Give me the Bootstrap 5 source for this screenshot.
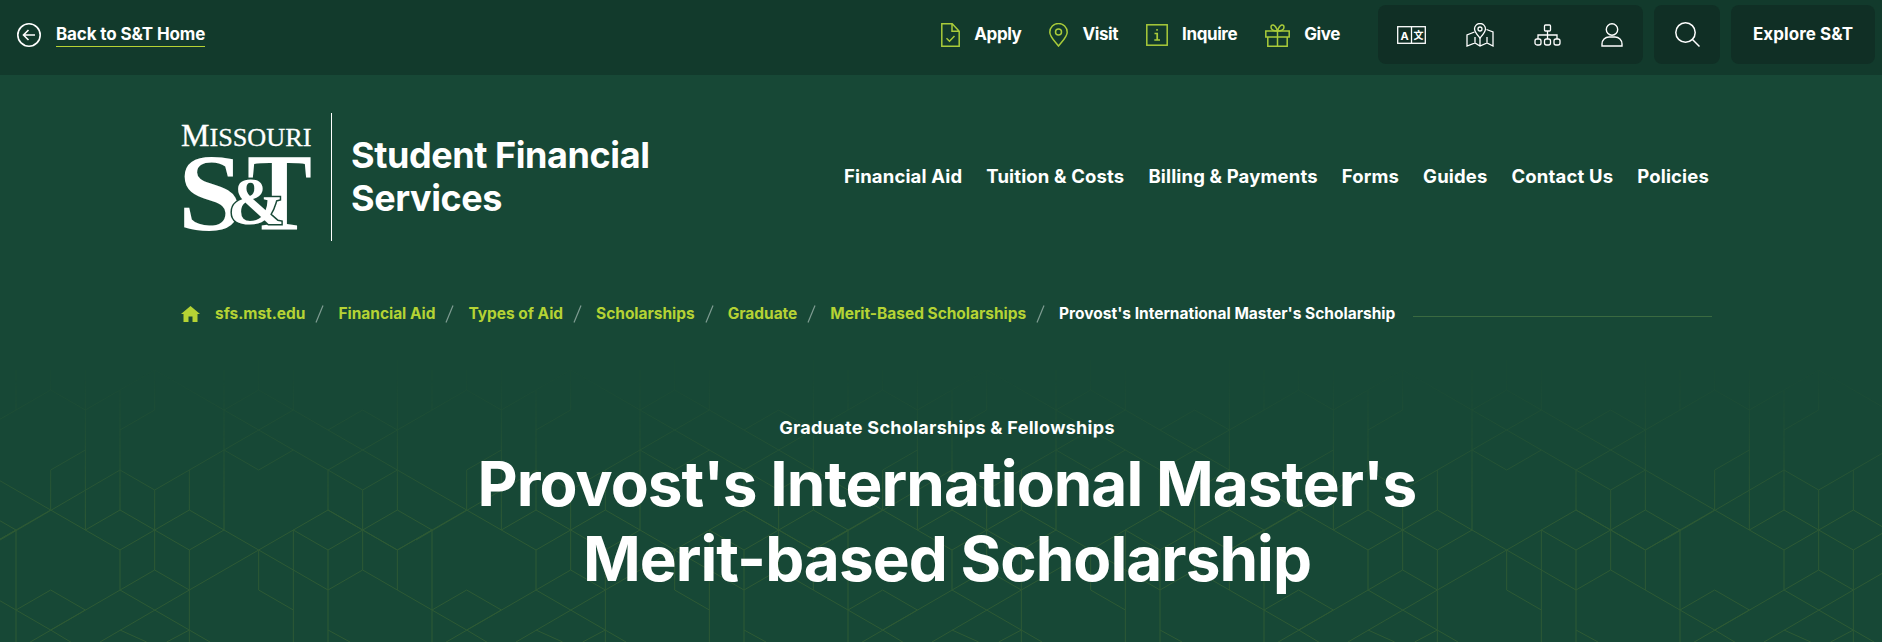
<!DOCTYPE html>
<html lang="en">
<head>
    <meta charset="UTF-8">
    <meta name="viewport" content="width=device-width, initial-scale=1.0">
    <title>Provost's International Master's Merit-based Scholarship</title>
    <link href="https://cdn.jsdelivr.net/npm/bootstrap@5.3.0/dist/css/bootstrap.min.css" rel="stylesheet">
    <script src="https://cdn.jsdelivr.net/npm/bootstrap@5.3.0/dist/js/bootstrap.bundle.min.js"></script>
    <style>
        html, body { height: 100%; overflow: hidden; }
        body {
            background: #174836;
            color: #fff;
            font-family: Inter, "Liberation Sans", sans-serif;
            font-weight: 700;
        }
        a { color: inherit; text-decoration: none; }
        svg { display: block; flex: none; }

        .top-strip { height: 75px; background: #123a2c; padding: 5px 7px 11px 17px; }
        .back-link { font-size: 17px; letter-spacing: -.13px; border-bottom: 1px solid #b5d334; line-height: 20px; padding-bottom: 2px; margin-left: 15px; margin-top: 1px; }
        .quick-links { margin-right: 38px; gap: 28px; font-size: 17px; letter-spacing: -.4px; }
        .quick-links a { gap: 14px; }
        .dark-panel { background: #102f25; border-radius: 8px; height: 59px; }
        .tool-panel { width: 265px; padding: 0 20px 0 19px; }
        .search-panel { width: 66px; margin-left: 11px; }
        .explore-panel { width: 144px; margin-left: 11px; font-size: 17px; letter-spacing: .05px; }

        .page-wrap { padding: 0 170px 0 181px; }
        .head-row { padding-top: 38px; }
        .logo-mark { margin: 0 -3px; }
        .logo-rule { width: 1px; height: 128px; background: #fff; margin: 0 20px 0 19px; }
        .unit-name { font-size: 36px; line-height: 43px; letter-spacing: -.42px; width: 340px; margin: 0 0 0 -1px; }
        .main-links { gap: 24px; font-size: 18.5px; letter-spacing: .16px; margin-right: 3px; margin-top: -1px; }

        .crumbs { margin-top: 61px; height: 24px; font-size: 15.5px; letter-spacing: -.03px; color: #b5d334; }
        .crumbs .sep { width: 33px; flex: none; }
        .crumbs .now { color: #fff; letter-spacing: 0; }
        .crumb-line { height: 1px; background: #3a6a40; margin: 4px 0 0 18px; }
        .home-mark { margin-right: 15px; }

        .hero-block { margin-top: 90px; padding-left: 12px; position: relative; z-index: 1; }
        .hero-kicker { font-size: 18px; line-height: 24px; letter-spacing: .3px; }
        .hero-title { font-size: 62px; line-height: 75px; font-weight: 700; letter-spacing: -.95px; margin: 6px 0 0; }

        .hex-bg {
            position: absolute; left: 0; top: 350px; width: 1882px; height: 292px;
            -webkit-mask-image: linear-gradient(to bottom, rgba(0,0,0,.08) 10%, rgba(0,0,0,.55) 35%, #000 58%);
            mask-image: linear-gradient(to bottom, rgba(0,0,0,.08) 10%, rgba(0,0,0,.55) 35%, #000 58%);
        }
    </style>
</head>
<body>
    <!-- hex line texture, one 416px tile repeated across -->
    <svg class="hex-bg" viewBox="0 0 5646 876" fill="none" stroke="#2e5a35" stroke-width="3">
        <defs>
            <g id="hexTile">
                <path d="M48 60V180M152 60V120M256 60V540M360 120V480M464 60V180M672 60V540M776 30V120M880 60V180M1192 30V480"/>
                <path d="M-56 240L152 120L256 180L464 60L672 180L776 120L1192 360L1400 480"/>
                <path d="M360 240L464 180M672 180L1088 420M672 300L776 360L880 300M672 300L880 180"/>
                <path d="M984 240L1088 180L1192 240L984 360V480M1192 360L1088 420V660"/>
                <path d="M672 300L464 420L360 360L0 570M152 360L256 300M152 360V480M568 360V480M464 420V660"/>
                <path d="M152 480L360 600L568 480L672 540L568 600L360 480L256 540"/>
                <path d="M672 540L984 720L1088 660L1400 840L1500 900M360 600V720M568 600V900"/>
                <path d="M464 660L84 880M464 660L568 720L776 600L984 480L1192 600L1400 480M568 720L300 876"/>
                <path d="M360 720L630 876M776 600V720L880 780M880 540L984 600L1192 480L1296 540L1192 600L984 480"/>
                <path d="M880 540V876M984 600V876M1192 600V720M1296 540V876M360 840L440 876M568 840L500 876M984 840L1050 876"/>
                <path d="M1296 780L1400 720L1504 780L1400 840"/>
            </g>
        </defs>
        <use href="#hexTile" x="-1248"/>
        <use href="#hexTile"/>
        <use href="#hexTile" x="1248"/>
        <use href="#hexTile" x="2496"/>
        <use href="#hexTile" x="3744"/>
        <use href="#hexTile" x="4992"/>
    </svg>

    <div class="top-strip d-flex align-items-center">
        <a href="#" class="d-flex align-items-center">
            <svg width="24" height="24" viewBox="0 0 24 24" fill="none" stroke="#fff" stroke-width="1.6">
                <circle cx="12" cy="12" r="11.2"/>
                <path d="M18 12H6.5M11.5 7l-5 5 5 5"/>
            </svg>
            <span class="back-link">Back to S&amp;T Home</span>
        </a>
        <div class="quick-links d-flex align-items-center ms-auto">
            <a href="#" class="d-flex align-items-center">
                <svg width="19" height="24" viewBox="0 0 19 24" fill="none" stroke="#a9cb3a" stroke-width="1.5">
                    <path d="M.8.8h10.4l7 7.4v15H.8zM11 1v7.2h7"/>
                    <path d="M5.5 15.2l3 3 5-5.2"/>
                </svg>
                Apply
            </a>
            <a href="#" class="d-flex align-items-center">
                <svg width="19" height="24" viewBox="0 0 19 24" fill="none" stroke="#a9cb3a" stroke-width="1.5">
                    <path d="M9.5 23C5 17.5.8 13.6.8 9.2a8.7 8.7 0 0 1 17.4 0C18.200 13.600 14 17.500 9.500 23z"/>
                    <circle cx="9.500" cy="9" r="3"/>
                </svg>
                Visit
            </a>
            <a href="#" class="d-flex align-items-center">
                <svg width="22" height="22" viewBox="0 0 22 22" fill="none" stroke="#a9cb3a" stroke-width="1.5">
                    <rect x=".8" y=".8" width="20.400" height="20.400"/>
                    <path d="M8.500 9.500H11.200V16M8.300 16H14M10.300 5.800H11.800" stroke-width="1.700"/>
                </svg>
                Inquire
            </a>
            <a href="#" class="d-flex align-items-center">
                <svg width="25" height="24" viewBox="0 0 25 24" fill="none" stroke="#a9cb3a" stroke-width="1.5">
                    <path d="M.8 8h23.400v6H.8zM2.800 14v9.200h19.400V14M12.500 8v15.200"/>
                    <path d="M12.500 8C9 8 6 7 6 4s4-3.500 6.500 4zM12.500 8C16 8 19 7 19 4s-4-3.500-6.500 4z"/>
                </svg>
                Give
            </a>
        </div>
        <div class="dark-panel tool-panel d-flex align-items-center justify-content-between">
            <svg width="29" height="18" viewBox="0 0 29 18" fill="none" stroke="#fff" stroke-width="1.300">
                <rect x=".7" y=".7" width="27.600" height="16.600"/>
                <path d="M14.500 1v16"/>
                <text x="7.500" y="13.500" text-anchor="middle" fill="#fff" stroke="none" font-family="Inter, sans-serif" font-weight="700" font-size="11">A</text>
                <text x="21.500" y="13" text-anchor="middle" fill="#fff" stroke="none" font-family="'Noto Sans CJK SC', sans-serif" font-weight="700" font-size="10">文</text>
            </svg>
            <svg width="28" height="24" viewBox="0 0 28 24" fill="none" stroke="#fff" stroke-width="1.300">
                <path d="M8.500 9L1 12v11l8-3 5 3 7-3 6 3V9l-6.500-2.500M9 20v-6M14 23v-8M21 20v-6"/>
                <path d="M14 15c-3-3.500-5.500-6-5.500-9a5.500 5.500 0 0 1 11 0c0 3-2.500 5.500-5.500 9z"/>
                <circle cx="14" cy="6" r="2"/>
            </svg>
            <svg width="27" height="22" viewBox="0 0 27 22" fill="none" stroke="#fff" stroke-width="1.300">
                <rect x="10.500" y="1" width="6" height="6" rx="1"/>
                <path d="M13.500 7v8M4 15v-4h19v4"/>
                <rect x="1" y="15" width="6" height="6" rx="2"/>
                <rect x="10.500" y="15" width="6" height="6" rx="2"/>
                <rect x="20" y="15" width="6" height="6" rx="2"/>
            </svg>
            <svg width="22" height="24" viewBox="0 0 22 24" fill="none" stroke="#fff" stroke-width="1.400">
                <circle cx="11" cy="6.500" r="5.700"/>
                <path d="M1 23v-2a7 7 0 0 1 7-7h6a7 7 0 0 1 7 7v2z"/>
            </svg>
        </div>
        <div class="dark-panel search-panel d-flex align-items-center justify-content-center">
            <svg width="25" height="25" viewBox="0 0 25 25" fill="none" stroke="#fff" stroke-width="1.500">
                <circle cx="10.500" cy="10.500" r="9.700"/>
                <path d="M17.500 17.500L24.500 24.500"/>
            </svg>
        </div>
        <a href="#" class="dark-panel explore-panel d-flex align-items-center justify-content-center">Explore S&amp;T</a>
    </div>

    <div class="page-wrap">
        <div class="head-row d-flex align-items-center">
            <svg class="logo-mark" width="137" height="115" viewBox="-3 -4 137 115" fill="#fff" font-family="'Liberation Serif', serif" font-weight="400">
                <text x="0" y="22" font-size="32" stroke="#fff" stroke-width=".3">M<tspan font-size="26" textLength="102" lengthAdjust="spacingAndGlyphs">ISSOURI</tspan></text>
                <text x="-3" y="106" font-size="110" font-weight="700" textLength="65" lengthAdjust="spacingAndGlyphs">S</text>
                <text x="66" y="106" font-size="110" font-weight="700" textLength="65" lengthAdjust="spacingAndGlyphs">T</text>
                <text x="47" y="100" font-size="68" font-weight="700" stroke="#174836" stroke-width="3" paint-order="stroke">&amp;</text>
            </svg>
            <div class="logo-rule"></div>
            <div class="unit-name">Student Financial Services</div>
            <div class="main-links d-flex ms-auto">
                <a href="#">Financial Aid</a>
                <a href="#">Tuition &amp; Costs</a>
                <a href="#">Billing &amp; Payments</a>
                <a href="#">Forms</a>
                <a href="#">Guides</a>
                <a href="#">Contact Us</a>
                <a href="#">Policies</a>
            </div>
        </div>

        <nav class="crumbs d-flex align-items-center">
            <svg class="home-mark" width="19" height="16" viewBox="0 0 19 16" fill="#b5d334">
                <path d="M9.500 0L19 8h-2.500v8H11.500v-5.500h-4V16H2.500V8H0z"/>
            </svg>
            <a href="#">sfs.mst.edu</a>
            <svg class="sep" height="18" viewBox="0 0 33 18" fill="none" stroke="#7f9c92" stroke-width="1.200"><path d="M11 17.500L18 .5"/></svg>
            <a href="#">Financial Aid</a>
            <svg class="sep" height="18" viewBox="0 0 33 18" fill="none" stroke="#7f9c92" stroke-width="1.200"><path d="M11 17.500L18 .5"/></svg>
            <a href="#">Types of Aid</a>
            <svg class="sep" height="18" viewBox="0 0 33 18" fill="none" stroke="#7f9c92" stroke-width="1.200"><path d="M11 17.500L18 .5"/></svg>
            <a href="#">Scholarships</a>
            <svg class="sep" height="18" viewBox="0 0 33 18" fill="none" stroke="#7f9c92" stroke-width="1.200"><path d="M11 17.500L18 .5"/></svg>
            <a href="#">Graduate</a>
            <svg class="sep" height="18" viewBox="0 0 33 18" fill="none" stroke="#7f9c92" stroke-width="1.200"><path d="M11 17.500L18 .5"/></svg>
            <a href="#">Merit-Based Scholarships</a>
            <svg class="sep" height="18" viewBox="0 0 33 18" fill="none" stroke="#7f9c92" stroke-width="1.200"><path d="M11 17.500L18 .5"/></svg>
            <span class="now">Provost's International Master's Scholarship</span>
            <div class="crumb-line flex-grow-1"></div>
        </nav>
    </div>

    <div class="hero-block text-center">
        <div class="hero-kicker">Graduate Scholarships &amp; Fellowships</div>
        <h1 class="hero-title">Provost's International Master's<br>Merit-based Scholarship</h1>
    </div>
</body>
</html>
